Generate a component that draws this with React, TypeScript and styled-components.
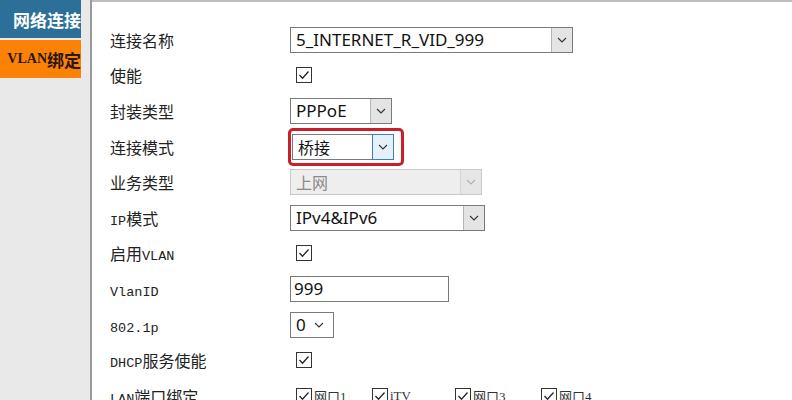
import React from 'react';
import styled, { createGlobalStyle } from 'styled-components';

const GlobalStyle = createGlobalStyle`
  html, body {
    margin: 0;
    padding: 0;
    background: #ffffff;
  }
  body {
    font-family: "Noto Sans CJK SC", "Noto Sans", sans-serif;
    overflow: hidden;
  }
`;

const Page = styled.div`
  display: flex;
  width: 792px;
  height: 400px;
  overflow: hidden;
`;

const Sidebar = styled.div`
  width: 90px;
  flex-shrink: 0;
  background: #e9e9e9;
  border-right: 2px solid #9a9a9a;
  box-shadow: 1px 0 2px rgba(0, 0, 0, 0.15);
  display: flex;
  flex-direction: column;
  gap: 2px;
`;

const NavItem = styled.div<{ $active?: boolean }>`
  width: 81px;
  height: 38px;
  overflow: hidden;
  white-space: nowrap;
  display: flex;
  align-items: center;
  justify-content: flex-end;
  font-weight: 700;
  font-size: 17px;
  background: ${(p) => (p.$active ? '#fb8205' : '#2c6f99')};
  color: ${(p) => (p.$active ? '#2a160a' : '#ffffff')};
`;

const NavLatin = styled.span`
  font-family: "Liberation Serif", serif;
  font-size: 14px;
  font-weight: 700;
`;

const Content = styled.div`
  flex: 1;
  border-top: 2px solid #bdbdbd;
  padding: 20px 0 0 18px;
  background: #ffffff;
`;

const Form = styled.div`
  display: grid;
  grid-template-columns: 180px 1fr;
  grid-auto-rows: 35.6px;
  align-items: center;
`;

const Label = styled.div`
  font-size: 16px;
  color: #222222;
  white-space: nowrap;
`;

const Latin = styled.span`
  font-family: "Liberation Mono", monospace;
  font-size: 13.5px;
`;

const Field = styled.div`
  display: flex;
  align-items: center;
`;

const SelectBox = styled.div<{ $w: number; $disabled?: boolean }>`
  width: ${(p) => p.$w}px;
  height: 26px;
  box-sizing: border-box;
  border: 1px solid ${(p) => (p.$disabled ? '#c9c9c9' : '#7a7a7a')};
  background: ${(p) => (p.$disabled ? '#eeeeee' : '#ffffff')};
  display: flex;
  align-items: stretch;
`;

const Value = styled.div<{ $disabled?: boolean }>`
  flex: 1;
  padding-left: 5px;
  display: flex;
  align-items: center;
  font-family: "Noto Sans", "Noto Sans CJK SC", sans-serif;
  font-size: 17px;
  color: ${(p) => (p.$disabled ? '#8a8a8a' : '#111111')};
  white-space: nowrap;
  overflow: hidden;
`;

const CjkValue = styled.span`
  font-family: "Noto Sans CJK SC", sans-serif;
  font-size: 16px;
`;

const DropButton = styled.div<{ $focus?: boolean; $disabled?: boolean }>`
  width: 21px;
  box-sizing: border-box;
  display: flex;
  align-items: center;
  justify-content: center;
  border-left: 1px solid ${(p) => (p.$focus ? '#3c7fb1' : p.$disabled ? '#d4d4d4' : '#b5b5b5')};
  background: ${(p) => (p.$focus ? '#e5f1fb' : p.$disabled ? '#e6e6e6' : '#e4e4e4')};
  ${(p) => (p.$focus ? 'border: 1px solid #3c7fb1; margin: -1px -1px -1px 0; width: 22px;' : '')}
`;

const Highlight = styled.div`
  margin-left: -2px;
  padding: 3px 7px 3px 1px;
  border: 3px solid #c8202b;
  border-radius: 5px;
  display: flex;
`;

const Chevron: React.FC<{ color?: string }> = ({ color = '#333333' }) => (
  <svg width="10" height="6" viewBox="0 0 10 6">
    <polyline points="1,1 5,5 9,1" fill="none" stroke={color} strokeWidth="1.1" />
  </svg>
);

const SmallSelect = styled.div`
  width: 44px;
  height: 26px;
  box-sizing: border-box;
  border: 1px solid #7a7a7a;
  display: flex;
  align-items: center;
  gap: 8px;
  padding-left: 5px;
  font-family: "Noto Sans", sans-serif;
  font-size: 17px;
  color: #111111;
`;

const TextInput = styled.div`
  width: 159px;
  height: 26px;
  box-sizing: border-box;
  border: 1px solid #7a7a7a;
  padding-left: 3px;
  display: flex;
  align-items: center;
  font-family: "Noto Sans", sans-serif;
  font-size: 17px;
  color: #111111;
`;

const Box = styled.div`
  width: 16px;
  height: 16px;
  box-sizing: border-box;
  border: 1px solid #333333;
  background: #ffffff;
  margin-left: 6px;
  display: flex;
  align-items: center;
  justify-content: center;
  flex-shrink: 0;
`;

const Checkbox: React.FC = () => (
  <Box>
    <svg width="12" height="10" viewBox="0 0 12 10">
      <polyline points="1.5,5 4.5,8.2 10.5,1.5" fill="none" stroke="#222222" strokeWidth="1.3" />
    </svg>
  </Box>
);

const PortRow = styled.div`
  display: grid;
  grid-template-columns: 76px 83px 86px auto;
  align-items: center;
`;

const Port = styled.div`
  display: flex;
  align-items: center;
  gap: 2px;
`;

const PortLabel = styled.span`
  font-family: "Liberation Serif", "Noto Sans CJK SC", serif;
  font-size: 13px;
  color: #333333;
`;

const Select: React.FC<{ w: number; disabled?: boolean; children: React.ReactNode }> = ({ w, disabled, children }) => (
  <SelectBox $w={w} $disabled={disabled}>
    <Value $disabled={disabled}>{children}</Value>
    <DropButton $disabled={disabled}>
      <Chevron color={disabled ? '#b0b0b0' : '#333333'} />
    </DropButton>
  </SelectBox>
);

export default function App() {
  return (
    <Page>
      <GlobalStyle />
      <Sidebar>
        <NavItem>网络连接</NavItem>
        <NavItem $active>
          <NavLatin>VLAN</NavLatin>绑定
        </NavItem>
      </Sidebar>
      <Content>
        <Form>
          <Label>连接名称</Label>
          <Field>
            <Select w={283}>5_INTERNET_R_VID_999</Select>
          </Field>

          <Label>使能</Label>
          <Field>
            <Checkbox />
          </Field>

          <Label>封装类型</Label>
          <Field>
            <Select w={102}>PPPoE</Select>
          </Field>

          <Label>连接模式</Label>
          <Field>
            <Highlight>
              <SelectBox $w={102}>
                <Value>
                  <CjkValue>桥接</CjkValue>
                </Value>
                <DropButton $focus>
                  <Chevron />
                </DropButton>
              </SelectBox>
            </Highlight>
          </Field>

          <Label>业务类型</Label>
          <Field>
            <Select w={192} disabled>
              <CjkValue>上网</CjkValue>
            </Select>
          </Field>

          <Label>
            <Latin>IP</Latin>模式
          </Label>
          <Field>
            <Select w={195}>IPv4&amp;IPv6</Select>
          </Field>

          <Label>
            启用<Latin>VLAN</Latin>
          </Label>
          <Field>
            <Checkbox />
          </Field>

          <Label>
            <Latin>VlanID</Latin>
          </Label>
          <Field>
            <TextInput>999</TextInput>
          </Field>

          <Label>
            <Latin>802.1p</Latin>
          </Label>
          <Field>
            <SmallSelect>
              0<Chevron />
            </SmallSelect>
          </Field>

          <Label>
            <Latin>DHCP</Latin>服务使能
          </Label>
          <Field>
            <Checkbox />
          </Field>

          <Label>
            <Latin>LAN</Latin>端口绑定
          </Label>
          <PortRow>
            <Port>
              <Checkbox />
              <PortLabel>网口1</PortLabel>
            </Port>
            <Port>
              <Checkbox />
              <PortLabel>iTV</PortLabel>
            </Port>
            <Port>
              <Checkbox />
              <PortLabel>网口3</PortLabel>
            </Port>
            <Port>
              <Checkbox />
              <PortLabel>网口4</PortLabel>
            </Port>
          </PortRow>
        </Form>
      </Content>
    </Page>
  );
}
